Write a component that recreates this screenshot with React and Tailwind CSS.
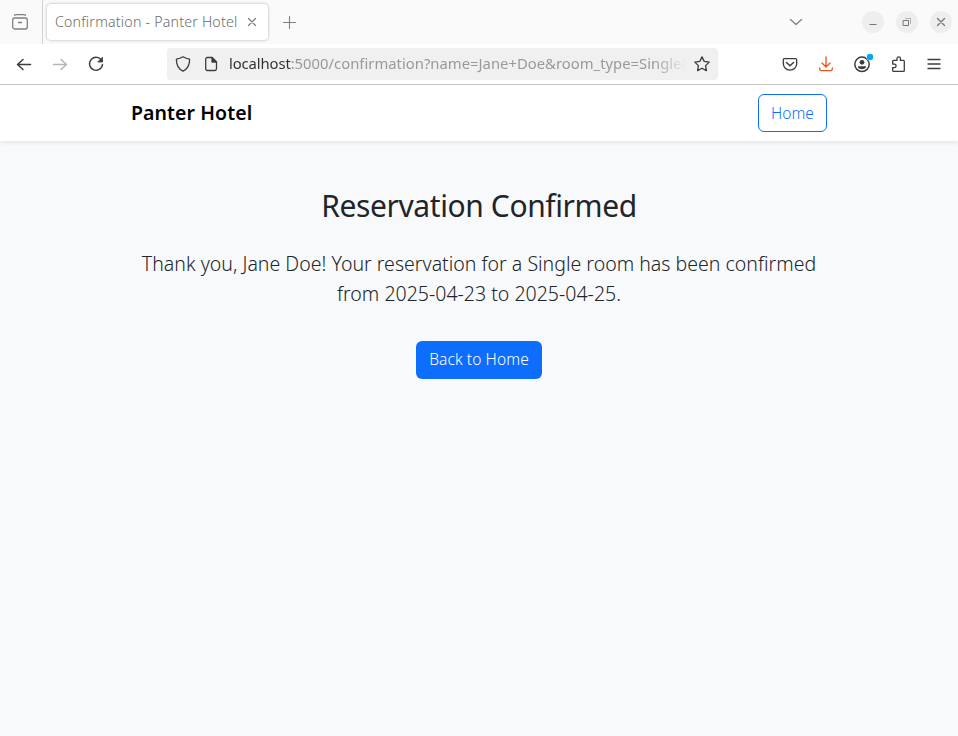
import React from "react";

function Icon({ children, className = "" }) {
  return (
    <svg viewBox="0 0 16 16" fill="none" stroke="currentColor" strokeWidth="1.3" strokeLinecap="round" strokeLinejoin="round" className={`block h-4 w-4 shrink-0 ${className}`}>
      {children}
    </svg>
  );
}

function WindowButton({ children }) {
  return (
    <button className="flex h-[22px] w-[22px] items-center justify-center rounded-full bg-[#eeeeee] text-[#777777]">
      <Icon>{children}</Icon>
    </button>
  );
}

function TabStrip() {
  return (
    <div className="flex h-11 items-center bg-[#fafafa] text-[#808080]">
      <div className="flex h-11 w-[43px] shrink-0 items-center border-r border-[#d2d2d2] pl-3">
        <Icon>
          <rect x="0.7" y="4" width="14.6" height="11" rx="2" />
          <path d="M2.5 1.2Q3 .7 4 .7h8q1 0 1.500.5M6.500 8.500h3" />
        </Icon>
      </div>
      <div className="ml-1 flex h-9 w-[221px] shrink-0 items-center rounded-[4px] bg-white pl-2 shadow-[0_0_3px_rgba(0,0,0,0.3)]">
        <span className="w-[184px] whitespace-nowrap text-[14.2px] font-light tracking-[0.2px] text-[#6c6c6c]">Confirmation - Panter Hotel</span>
        <Icon className="ml-[5px]"><path d="m4.500 4.500 7 7m0-7-7 7" /></Icon>
      </div>
      <Icon className="ml-[13px]"><path d="M8.500 2.500v12M2.500 8.500h12" strokeWidth="1.1" /></Icon>
      <div className="ml-auto flex items-center pr-[6px]">
        <Icon className="mr-[58px]"><path d="m2.500 5.500 5.500 5 5.500-5" /></Icon>
        <div className="flex gap-3">
          <WindowButton><path d="M4.500 10.500h7" strokeWidth="1" strokeLinecap="butt" /></WindowButton>
          <WindowButton>
            <path d="M4.500 6.500h5v5h-5z" strokeWidth="1" />
            <path d="M6.500 4.500h5v5" strokeWidth="1" opacity="0.5" />
          </WindowButton>
          <WindowButton><path d="m4.500 4.500 7 7m0-7-7 7" /></WindowButton>
        </div>
      </div>
    </div>
  );
}

function Toolbar() {
  return (
    <div className="flex h-[41px] items-center border-b border-[#c8c8c8] bg-white text-[#3c3c3c]">
      <div className="flex w-[167px] shrink-0 gap-5 pl-4">
        <Icon><path d="M14.500 8.500H1.500m5.500-5-5.500 5 5.500 5" strokeWidth="1.5" /></Icon>
        <Icon className="text-[#b5b5b5]"><path d="M1.500 8.500h13M9 3.500l5.500 5-5.500 5" strokeWidth="1.5" /></Icon>
        <Icon>
          <path d="M13.900 5A6.500 6.500 0 1 0 14.500 8.500" strokeWidth="1.4" />
          <path d="M14.500 1.500v4.500H10z" fill="currentColor" strokeWidth="0.8" />
        </Icon>
      </div>
      <div className="flex h-8 w-[551px] shrink-0 items-center rounded-[4px] bg-[#f0f0f0] pl-2">
        <Icon><path d="M8 .8c2 1.300 4 2 6.600 2.300.2 5.400-1.600 9.700-6.600 12.100C3 12.800 1.200 8.500 1.400 3.100 4 2.800 6 2.100 8 .8Z" /></Icon>
        <Icon className="ml-3">
          <path d="M2.700 3.200a1.700 1.700 0 0 1 1.700-1.700H9l4.500 4.500v6.800a1.700 1.700 0 0 1-1.700 1.700H4.400a1.700 1.700 0 0 1-1.700-1.700Z" />
          <path d="M9 1.500V6h4.500Z" fill="currentColor" />
        </Icon>
        <div className="mb-0.5 ml-[10px] w-[457px] overflow-hidden whitespace-nowrap text-[14.800px] text-[#999999] [mask-image:linear-gradient(to_right,black_calc(100%-32px),transparent)]">
          <span className="tracking-[-0.1px] text-[#333333]">localhost</span><span className="tracking-[0.02px]">:5000/confirmation?name=Jane+Doe&amp;room_type=Single&amp;</span>
        </div>
        <Icon className="ml-2"><path d="m8 .9 2.200 4.500 5 .7-3.600 3.500.8 5-4.400-2.400-4.400 2.400.8-5L.8 6.100l5-.7Z" /></Icon>
      </div>
      <div className="ml-auto flex gap-5 pr-4">
        <Icon>
          <path d="M2.300 2.700h11.400q1 0 1 1V7.500a6.700 6.700 0 0 1-13.400 0V3.700q0-1 1-1Z" />
          <path d="m4.500 6.500 3.500 3.200 3.500-3.200" strokeWidth="1.5" />
        </Icon>
        <Icon className="text-[#e95420]"><path d="M8 .8v10M4 7l4 4 4-4M1.700 12v1q0 1.700 1.700 1.700h9.200q1.700 0 1.700-1.700v-1" /></Icon>
        <Icon className="overflow-visible">
          <circle cx="8" cy="8.300" r="7.200" strokeWidth="1.500" />
          <circle cx="8" cy="6.300" r="2.400" fill="currentColor" stroke="none" />
          <path d="M4 10.300h8v1.200q-1.300 1.800-4 1.800t-4-1.800Z" fill="currentColor" stroke="none" />
          <circle cx="16" cy="1" r="3.500" fill="#fff" stroke="none" />
          <circle cx="16" cy="1" r="3.200" fill="#00a8f5" stroke="none" />
        </Icon>
        <Icon><path d="M2.700 7V5.300q0-.9.900-.9H7V2.600a1.700 1.700 0 0 1 3.400 0v1.800h3q.9 0 .9.900v9.100q0 .9-.9.900H3.600q-.9 0-.9-.9v-2.700h1.600a1.800 1.800 0 0 0 0-3.600H2.700Z" /></Icon>
        <Icon><path d="M2 3.500h12M2 8h12M2 12.500h12" /></Icon>
      </div>
    </div>
  );
}

export default function App() {
  return (
    <div className="flex h-[736px] w-[958px] flex-col overflow-hidden bg-[#f8f9fa] font-['Noto_Sans',sans-serif]">
      <TabStrip />
      <Toolbar />
      <nav className="flex h-14 shrink-0 items-center justify-between bg-white pl-[131px] pr-[131px] shadow-[0_2px_4px_rgba(0,0,0,0.075)]">
        <a className="whitespace-nowrap text-[19.500px] font-semibold leading-[30px] tracking-[0.08px] text-black">Panter Hotel</a>
        <a className="flex h-[38px] w-[69px] items-center justify-center rounded-[6px] border border-[#0d6efd] pt-0.5 text-[15.500px] font-light text-[#0d6efd]">Home</a>
      </nav>
      <main className="flex flex-col items-center pt-[47px] text-center text-[#212529]">
        <h1 className="whitespace-nowrap text-[30px] leading-[36px] tracking-[-0.4px]">Reservation Confirmed</h1>
        <p className="mt-[25px] whitespace-nowrap text-[19.500px] font-light leading-[30px] tracking-[0.01px]">
          <span className="block">Thank you, Jane Doe! Your reservation for a Single room has been confirmed</span>
          <span className="block">from 2025-04-23 to 2025-04-25.</span>
        </p>
        <a className="mt-8 flex h-[38px] w-[126px] items-center justify-center whitespace-nowrap rounded-[6px] bg-[#0d6efd] text-[15.500px] font-light tracking-[0.1px] text-white">Back to Home</a>
      </main>
    </div>
  );
}
